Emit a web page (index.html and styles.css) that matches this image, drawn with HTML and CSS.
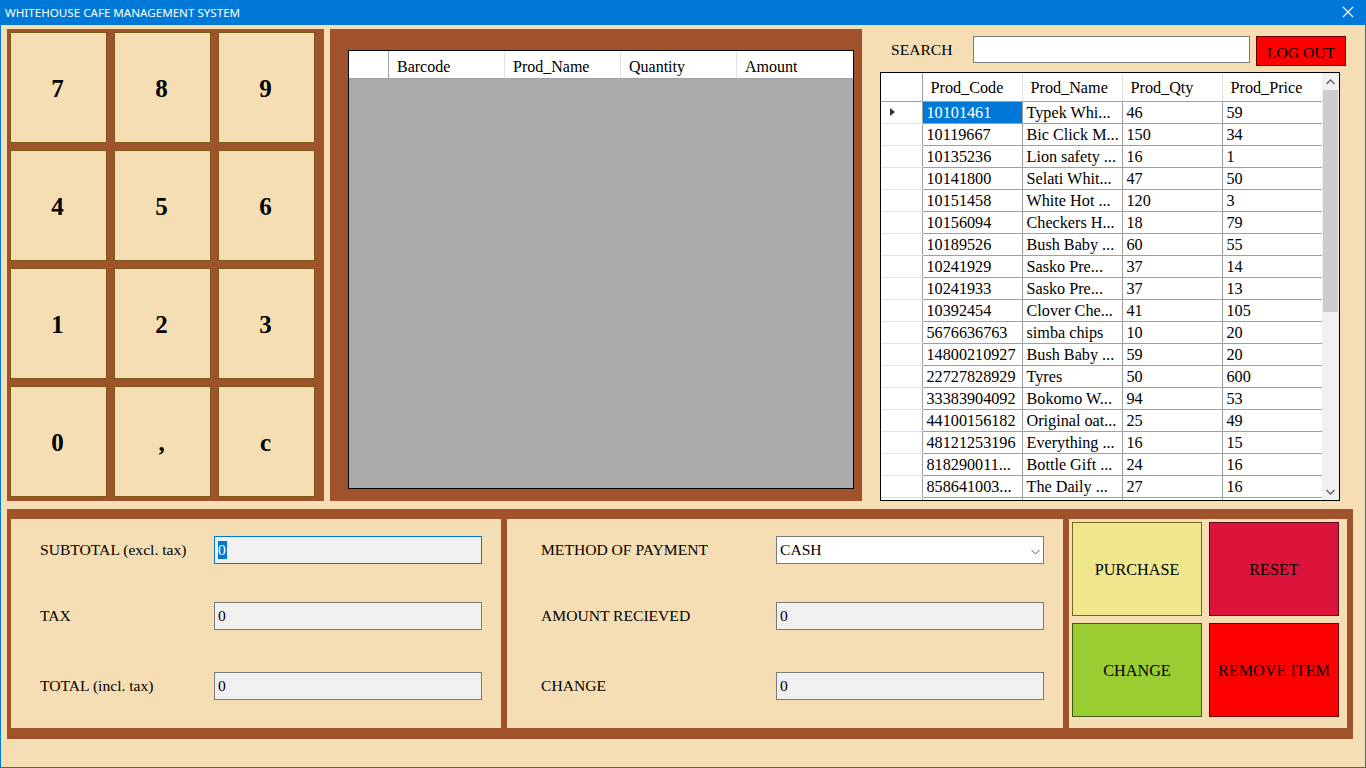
FILE: index.html
```html
<!DOCTYPE html>
<html>
<head>
<meta charset="utf-8">
<title>WHITEHOUSE CAFE MANAGEMENT SYSTEM</title>
<link rel="stylesheet" href="styles.css">
</head>
<body>
<div class="window">
  <div class="titlebar">
    <span class="title">WHITEHOUSE CAFE MANAGEMENT SYSTEM</span>
    <svg class="close" width="12" height="12" viewBox="0 0 12 12"><path d="M1 1 L11 11 M11 1 L1 11" stroke="#fff" stroke-width="1.2"/></svg>
  </div>
  <div class="content">
    <div class="top">
      <div class="keypad">
        <div class="key">7</div><div class="key">8</div><div class="key">9</div>
        <div class="key">4</div><div class="key">5</div><div class="key">6</div>
        <div class="key">1</div><div class="key">2</div><div class="key">3</div>
        <div class="key">0</div><div class="key">,</div><div class="key">c</div>
      </div>
      <div class="cart">
        <div class="cart-grid">
          <div class="cart-head">
            <div class="rh"></div>
            <div class="ch">Barcode</div>
            <div class="ch">Prod_Name</div>
            <div class="ch">Quantity</div>
            <div class="ch">Amount</div>
          </div>
        </div>
      </div>
      <div class="products">
        <div class="search-row">
          <span class="search-label">SEARCH</span>
          <input class="search-input" type="text">
          <button class="logout">LOG OUT</button>
        </div>
        <div class="prod-grid">
          <div class="prod-table-wrap">
            <table class="prod-table">
              <thead>
                <tr><th class="rowhead"></th><th>Prod_Code</th><th>Prod_Name</th><th>Prod_Qty</th><th>Prod_Price</th></tr>
              </thead>
              <tbody>
                <tr><td class="rowhead"><span class="arrow"></span></td><td class="sel">10101461</td><td>Typek Whi...</td><td>46</td><td>59</td></tr>
                <tr><td class="rowhead"></td><td>10119667</td><td>Bic Click M...</td><td>150</td><td>34</td></tr>
                <tr><td class="rowhead"></td><td>10135236</td><td>Lion safety ...</td><td>16</td><td>1</td></tr>
                <tr><td class="rowhead"></td><td>10141800</td><td>Selati Whit...</td><td>47</td><td>50</td></tr>
                <tr><td class="rowhead"></td><td>10151458</td><td>White Hot ...</td><td>120</td><td>3</td></tr>
                <tr><td class="rowhead"></td><td>10156094</td><td>Checkers H...</td><td>18</td><td>79</td></tr>
                <tr><td class="rowhead"></td><td>10189526</td><td>Bush Baby ...</td><td>60</td><td>55</td></tr>
                <tr><td class="rowhead"></td><td>10241929</td><td>Sasko Pre...</td><td>37</td><td>14</td></tr>
                <tr><td class="rowhead"></td><td>10241933</td><td>Sasko Pre...</td><td>37</td><td>13</td></tr>
                <tr><td class="rowhead"></td><td>10392454</td><td>Clover Che...</td><td>41</td><td>105</td></tr>
                <tr><td class="rowhead"></td><td>5676636763</td><td>simba chips</td><td>10</td><td>20</td></tr>
                <tr><td class="rowhead"></td><td>14800210927</td><td>Bush Baby ...</td><td>59</td><td>20</td></tr>
                <tr><td class="rowhead"></td><td>22727828929</td><td>Tyres</td><td>50</td><td>600</td></tr>
                <tr><td class="rowhead"></td><td>33383904092</td><td>Bokomo W...</td><td>94</td><td>53</td></tr>
                <tr><td class="rowhead"></td><td>44100156182</td><td>Original oat...</td><td>25</td><td>49</td></tr>
                <tr><td class="rowhead"></td><td>48121253196</td><td>Everything ...</td><td>16</td><td>15</td></tr>
                <tr><td class="rowhead"></td><td>818290011...</td><td>Bottle Gift ...</td><td>24</td><td>16</td></tr>
                <tr><td class="rowhead"></td><td>858641003...</td><td>The Daily ...</td><td>27</td><td>16</td></tr>
                <tr><td class="rowhead"></td><td>&nbsp;</td><td>&nbsp;</td><td>&nbsp;</td><td>&nbsp;</td></tr>
              </tbody>
            </table>
          </div>
          <div class="vscroll">
            <div class="sb-btn"><svg width="9" height="6" viewBox="0 0 9 6"><path d="M0.5 5 L4.5 1 L8.5 5" fill="none" stroke="#606060" stroke-width="1.3"/></svg></div>
            <div class="sb-track"><div class="sb-thumb"></div></div>
            <div class="sb-btn"><svg width="9" height="6" viewBox="0 0 9 6"><path d="M0.5 1 L4.5 5 L8.5 1" fill="none" stroke="#606060" stroke-width="1.3"/></svg></div>
          </div>
        </div>
      </div>
    </div>
    <div class="bottom">
      <div class="panel totals">
        <div class="field f1"><span class="label">SUBTOTAL (excl. tax)</span><div class="box focus"><span class="selected">0</span></div></div>
        <div class="field f2"><span class="label">TAX</span><div class="box">0</div></div>
        <div class="field f3"><span class="label">TOTAL (incl. tax)</span><div class="box">0</div></div>
      </div>
      <div class="panel payment">
        <div class="field f1"><span class="label">METHOD OF PAYMENT</span><div class="box combo">CASH<svg class="chev" width="9" height="6" viewBox="0 0 9 6"><path d="M0.5 1 L4.5 5 L8.5 1" fill="none" stroke="#555" stroke-width="1"/></svg></div></div>
        <div class="field f2"><span class="label">AMOUNT RECIEVED</span><div class="box">0</div></div>
        <div class="field f3"><span class="label">CHANGE</span><div class="box">0</div></div>
      </div>
      <div class="panel actions">
        <div class="act purchase">PURCHASE</div>
        <div class="act reset">RESET</div>
        <div class="act change">CHANGE</div>
        <div class="act remove">REMOVE ITEM</div>
      </div>
    </div>
  </div>
</div>
</body>
</html>
```
FILE: styles.css
```css
* { box-sizing: border-box; }
html, body { margin: 0; padding: 0; }
body {
  width: 1366px;
  height: 768px;
  overflow: hidden;
  font-family: "Liberation Serif", "Times New Roman", serif;
  font-size: 15.6px;
  color: #000;
}
.window {
  width: 1366px;
  height: 768px;
  border: 1px solid #0078d7;
  border-top: none;
  background: #f5deb3;
  display: flex;
  flex-direction: column;
}
.titlebar {
  height: 25px;
  margin: 0 -1px;
  background: #0078d7;
  color: #fff;
  display: flex;
  align-items: center;
  justify-content: space-between;
  padding: 0 12px 0 5px;
  font-family: "Noto Sans", "Open Sans", sans-serif;
  font-size: 11.6px;
}
.close { display: block; margin-top: -2px; }
.content {
  flex: 1;
  padding: 4px 0 0 6px;
}
.top {
  display: flex;
  height: 472px;
}
.keypad {
  width: 317px;
  height: 472px;
  background: #a0522d;
  padding: 3px 9px 4px 3px;
  display: grid;
  grid-template-columns: repeat(3, 97px);
  grid-template-rows: repeat(4, 111px);
  gap: 7px;
}
.key {
  background: #f5deb3;
  border: 1px solid #7a5a17;
  display: flex;
  align-items: center;
  justify-content: center;
  font-weight: bold;
  font-size: 25px;
  padding: 2px 2px 0 0;
}
.cart {
  width: 532px;
  margin-left: 6px;
  background: #a0522d;
  padding: 21px 8px 12px 18px;
}
.cart-grid {
  width: 506px;
  height: 439px;
  border: 1px solid #000;
  background: #ababab;
}
.cart-head {
  display: flex;
  height: 28px;
  background: #fff;
  border-bottom: 1px solid #a0a0a0;
  font-size: 16px;
}
.cart-head .rh {
  width: 40px;
  border-right: 1px solid #a0a0a0;
}
.cart-head .ch {
  width: 116px;
  border-right: 1px solid #e2e2e2;
  padding: 7px 0 0 8px;
}
.cart-head .ch:last-child { border-right: none; }
.products {
  width: 460px;
  margin-left: 18px;
  display: flex;
  flex-direction: column;
}
.search-row {
  height: 43px;
  margin-right: -6px;
  display: flex;
  align-items: flex-start;
  padding-top: 7px;
}
.search-label {
  margin: 5px 0 0 11px;
  width: 82px;
}
.search-input {
  width: 277px;
  height: 27px;
  border: 1px solid #7a7a7a;
  background: #fff;
  margin: 0;
}
.logout {
  width: 90px;
  height: 30px;
  margin-left: 6px;
  background: #ff0000;
  border: 1px solid #6b0000;
  font-family: "Liberation Serif", "Times New Roman", serif;
  font-size: 15.6px;
  color: #000;
  padding: 3px 0 0 0;
}
.prod-grid {
  height: 429px;
  border: 1px solid #000;
  background: #fff;
  display: flex;
  overflow: hidden;
}
.prod-table-wrap {
  width: 441px;
  overflow: hidden;
}
.prod-table {
  border-collapse: collapse;
  table-layout: fixed;
  width: 441px;
  font-size: 16.2px;
}
.prod-table th, .prod-table td {
  width: 100px;
  text-align: left;
  font-weight: normal;
  white-space: nowrap;
  overflow: hidden;
  padding: 0;
}
.prod-table th.rowhead, .prod-table td.rowhead { width: 41px; }
.prod-table th {
  height: 28px;
  padding: 3px 0 0 8px;
  border-right: 1px solid #e2e2e2;
  border-bottom: 1px solid #a0a0a0;
}
.prod-table th.rowhead { border-right: 1px solid #a0a0a0; padding: 0; }
.prod-table th:last-child { border-right: none; }
.prod-table td {
  height: 22px;
  line-height: 20px;
  padding: 1px 0 0 4px;
  border-right: 1px solid #a0a0a0;
  border-bottom: 1px solid #a0a0a0;
}
.prod-table td:last-child { border-right: none; }
.prod-table td.rowhead {
  border-bottom: 1px solid #e2e2e2;
  border-right: 1px solid #a0a0a0;
  padding: 0 0 0 9px;
}
.prod-table td.sel {
  background: #0078d7;
  color: #fff;
}
.arrow {
  display: block;
  width: 0;
  height: 0;
  border-top: 4px solid transparent;
  border-bottom: 4px solid transparent;
  border-left: 5px solid #333;
}
.vscroll {
  width: 17px;
  background: #f0f0f0;
  display: flex;
  flex-direction: column;
}
.sb-btn {
  height: 17px;
  display: flex;
  align-items: center;
  justify-content: center;
}
.sb-track {
  flex: 1;
}
.sb-thumb {
  margin: 0 auto;
  width: 15px;
  height: 222px;
  background: #cdcdcd;
}
.bottom {
  margin-top: 8px;
  width: 1346px;
  height: 230px;
  background: #a0522d;
  padding: 10px 6px 11px 4px;
  display: flex;
  gap: 6px;
}
.panel {
  background: #f5deb3;
  height: 209px;
}
.totals { width: 490px; padding-left: 29px; }
.payment { width: 556px; padding-left: 34px; }
.field {
  display: flex;
  align-items: center;
  height: 28px;
}
.f1 { margin-top: 17px; }
.f2 { margin-top: 38px; }
.f3 { margin-top: 42px; }
.label { flex: none; }
.totals .label { width: 174px; }
.payment .label { width: 235px; }
.box {
  width: 268px;
  height: 28px;
  background: #f0f0f0;
  border: 1px solid #7a7a7a;
  padding: 4px 0 0 3px;
  font-size: 15.6px;
}
.box.focus { border-color: #0078d7; }
.selected {
  background: #0078d7;
  color: #fff;
  padding: 0 1px 1px 0;
}
.box.combo {
  background: #fff;
  display: flex;
  justify-content: space-between;
  padding-right: 3px;
}
.chev { margin-top: 8px; }
.actions {
  width: 278px;
  padding: 3px 8px 11px 3px;
  display: grid;
  grid-template-columns: 130px 130px;
  grid-template-rows: 94px 94px;
  gap: 7px;
}
.act {
  display: flex;
  align-items: center;
  justify-content: center;
  font-size: 16.2px;
  border: 1px solid #333;
  padding-top: 2px;
}
.purchase { background: #f0e68c; border-color: #6f6a1e; }
.reset { background: #dc143c; border-color: #5a0a1a; }
.change { background: #9acd32; border-color: #3f5a14; }
.remove { background: #ff0000; border-color: #6b0000; }
```
